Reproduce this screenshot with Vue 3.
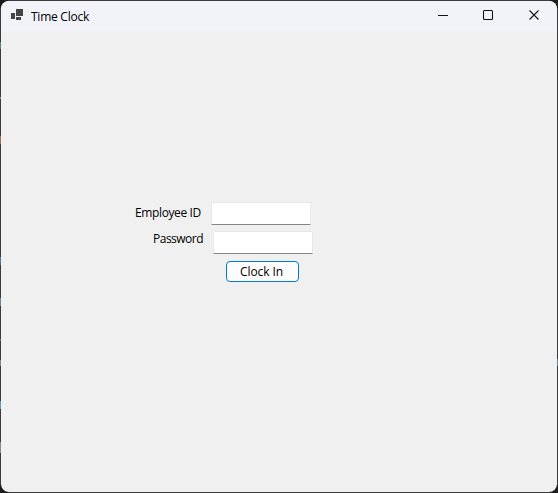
<script setup>
import { ref } from 'vue'

const employeeId = ref('')
const password = ref('')
</script>

<template>
  <div class="desktop">
    <main class="window">
      <header class="titlebar">
        <svg class="app-icon" width="12" height="11" viewBox="0 0 12 11" shape-rendering="crispEdges">
          <path fill="#444446" d="M5 0h7v7H5zM0 4h4v6H0zM5 8h5v3H5z" />
        </svg>
        <h1 class="title">Time Clock</h1>
        <nav class="controls">
          <svg width="46" height="29" viewBox="0 0 46 29">
            <path d="M19 14.5h10" />
          </svg>
          <svg width="46" height="29" viewBox="0 0 46 29">
            <rect x="18.5" y="9.5" width="9" height="9" rx="1" />
          </svg>
          <svg width="46" height="29" viewBox="0 0 46 29">
            <path d="M18.5 9.5l9 9m0-9l-9 9" />
          </svg>
        </nav>
      </header>
      <form class="form" @submit.prevent>
        <div class="row employee">
          <label for="employee">Employee ID</label>
          <input id="employee" v-model="employeeId" type="text" />
        </div>
        <div class="row password">
          <label for="password">Password</label>
          <input id="password" v-model="password" type="password" />
        </div>
        <button type="submit"><span>Clock In</span></button>
      </form>
    </main>
  </div>
</template>

<style>
body {
  margin: 0;
}
</style>

<style scoped>
.desktop {
  box-sizing: border-box;
  width: 558px;
  height: 493px;
  background:
    linear-gradient(#4d8b62, #4d8b62) 0 42px / 1px 7px no-repeat,
    linear-gradient(#9b8a68, #9b8a68) 0 97px / 1px 2px no-repeat,
    linear-gradient(#a86d50, #a86d50) 0 136px / 1px 8px no-repeat,
    linear-gradient(#4c7795, #4c7795) 0 257px / 1px 8px no-repeat,
    linear-gradient(#6b8798, #6b8798) 0 298px / 1px 8px no-repeat,
    linear-gradient(#557b4c, #557b4c) 0 339px / 1px 2px no-repeat,
    linear-gradient(#858585, #858585) 0 360px / 1px 6px no-repeat,
    linear-gradient(#5799c3, #5799c3) 0 401px / 1px 8px no-repeat,
    linear-gradient(#8b8782, #8b8782) 0 442px / 1px 11px no-repeat,
    linear-gradient(#71878c, #71878c) 557px 359px / 1px 7px no-repeat,
    linear-gradient(#3b3b3b, #3b3b3b) 0 8px / 1px 477px no-repeat,
    linear-gradient(#3b3b3b, #3b3b3b) 557px 8px / 1px 477px no-repeat,
    linear-gradient(#3b3b3b, #3b3b3b) 8px 0 / 542px 493px no-repeat,
    #1c1c1c;
  padding: 1px;
  font-family: "Open Sans", "Noto Sans", sans-serif;
  font-size: 12px;
  color: #000;
}
.window {
  height: 491px;
  overflow: hidden;
  border-radius: 8px;
  background: #f0f0f0;
}
.titlebar {
  display: flex;
  align-items: flex-start;
  height: 30px;
  background: #f1f3f9;
}
.app-icon {
  margin: 8px 8px 0 10px;
}
.title {
  margin: 7px 0 0;
  font-size: 12px;
  font-weight: 400;
  line-height: 17px;
  letter-spacing: -0.25px;
  white-space: nowrap;
}
.controls {
  display: flex;
  margin-left: auto;
}
.controls svg {
  fill: none;
  stroke: #111;
  stroke-width: 1.1;
}
.form {
  padding-top: 171px;
}
.row {
  display: flex;
  height: 23px;
}
.row label {
  line-height: 17px;
  white-space: nowrap;
}
.employee {
  padding-left: 134px;
}
.employee label {
  width: 76px;
  padding-top: 2px;
  letter-spacing: -0.38px;
}
.password {
  margin-top: 6px;
  padding-left: 152px;
}
.password label {
  width: 60px;
  margin-top: -1px;
  letter-spacing: -0.5px;
}
input {
  box-sizing: border-box;
  width: 100px;
  height: 23px;
  margin: 0;
  padding: 3px;
  border: 1px solid #e8e8e8;
  border-bottom-color: #868686;
  border-radius: 1px;
  outline: none;
  background: #fff;
  font: inherit;
}
button {
  box-sizing: border-box;
  display: block;
  width: 73px;
  height: 21px;
  margin: 7px 0 0 225px;
  padding: 0 0 0 13px;
  border: 1px solid #0078d4;
  border-radius: 4px;
  background: #fdfdfd;
  color: #000;
  font: inherit;
  line-height: 19px;
  letter-spacing: -0.1px;
  text-align: left;
  white-space: nowrap;
}
</style>
